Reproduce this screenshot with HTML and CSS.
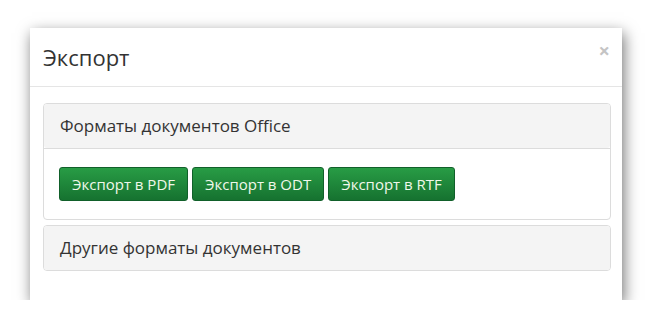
FILE: index.html
```html
<!DOCTYPE html>
<html lang="ru">
<head>
<meta charset="utf-8">
<title>Экспорт</title>
<link rel="stylesheet" href="styles.css">
</head>
<body>
<div class="modal">
  <div class="modal-header">
    <h4 class="modal-title">Экспорт</h4>
    <button class="close" type="button" aria-label="Закрыть">×</button>
  </div>
  <div class="modal-body">
    <div class="panel">
      <div class="panel-heading">Форматы документов Office</div>
      <div class="panel-body">
        <button class="btn" type="button">Экспорт в PDF</button>
        <button class="btn" type="button">Экспорт в ODT</button>
        <button class="btn" type="button">Экспорт в RTF</button>
      </div>
    </div>
    <div class="panel panel-collapsed">
      <div class="panel-heading">Другие форматы документов</div>
    </div>
  </div>
</div>
</body>
</html>
```

FILE: styles.css
```css
html, body {
  margin: 0;
  padding: 0;
  background: #fff;
}
body {
  font-family: "Open Sans", "Noto Sans", sans-serif;
  color: #333;
  padding: 28px 30px 0 30px;
}
.modal {
  width: 592px;
  height: 272px;
  box-sizing: border-box;
  background: #fff;
  box-shadow: 2px 5px 14px rgba(0,0,0,0.55);
  display: flex;
  flex-direction: column;
}
.modal-header {
  display: flex;
  justify-content: space-between;
  align-items: flex-start;
  height: 59px;
  box-sizing: border-box;
  padding: 15px 12px 0 13px;
  border-bottom: 1px solid #e5e5e5;
}
.modal-title {
  margin: 0;
  font-size: 22px;
  font-weight: 400;
  line-height: 28px;
  color: #333;
}
.close {
  border: 0;
  background: none;
  padding: 0;
  margin-top: 1px;
  font-family: "Open Sans", sans-serif;
  font-size: 20px;
  font-weight: 700;
  line-height: 14px;
  color: #c4c4c4;
}
.modal-body {
  padding: 16px 11px 0 13px;
}
.panel {
  border: 1px solid #dcdcdc;
  border-radius: 4px;
  background: #fff;
}
.panel + .panel {
  margin-top: 5px;
}
.panel-heading {
  background: #f4f4f4;
  padding: 12px 16px;
  font-size: 17px;
  line-height: 20px;
  color: #333;
  border-radius: 3px;
}
.panel-body {
  border-top: 1px solid #dcdcdc;
  padding: 18px 15px 18px 15px;
  display: flex;
  gap: 4px;
}
.btn {
  font-family: "Open Sans", sans-serif;
  font-size: 15px;
  line-height: 18px;
  padding: 7px 12px;
  color: #f0f8ea;
  background: linear-gradient(to bottom, #289c45 0%, #167230 100%);
  border: 1px solid #11602a;
  border-radius: 3px;
}
```
